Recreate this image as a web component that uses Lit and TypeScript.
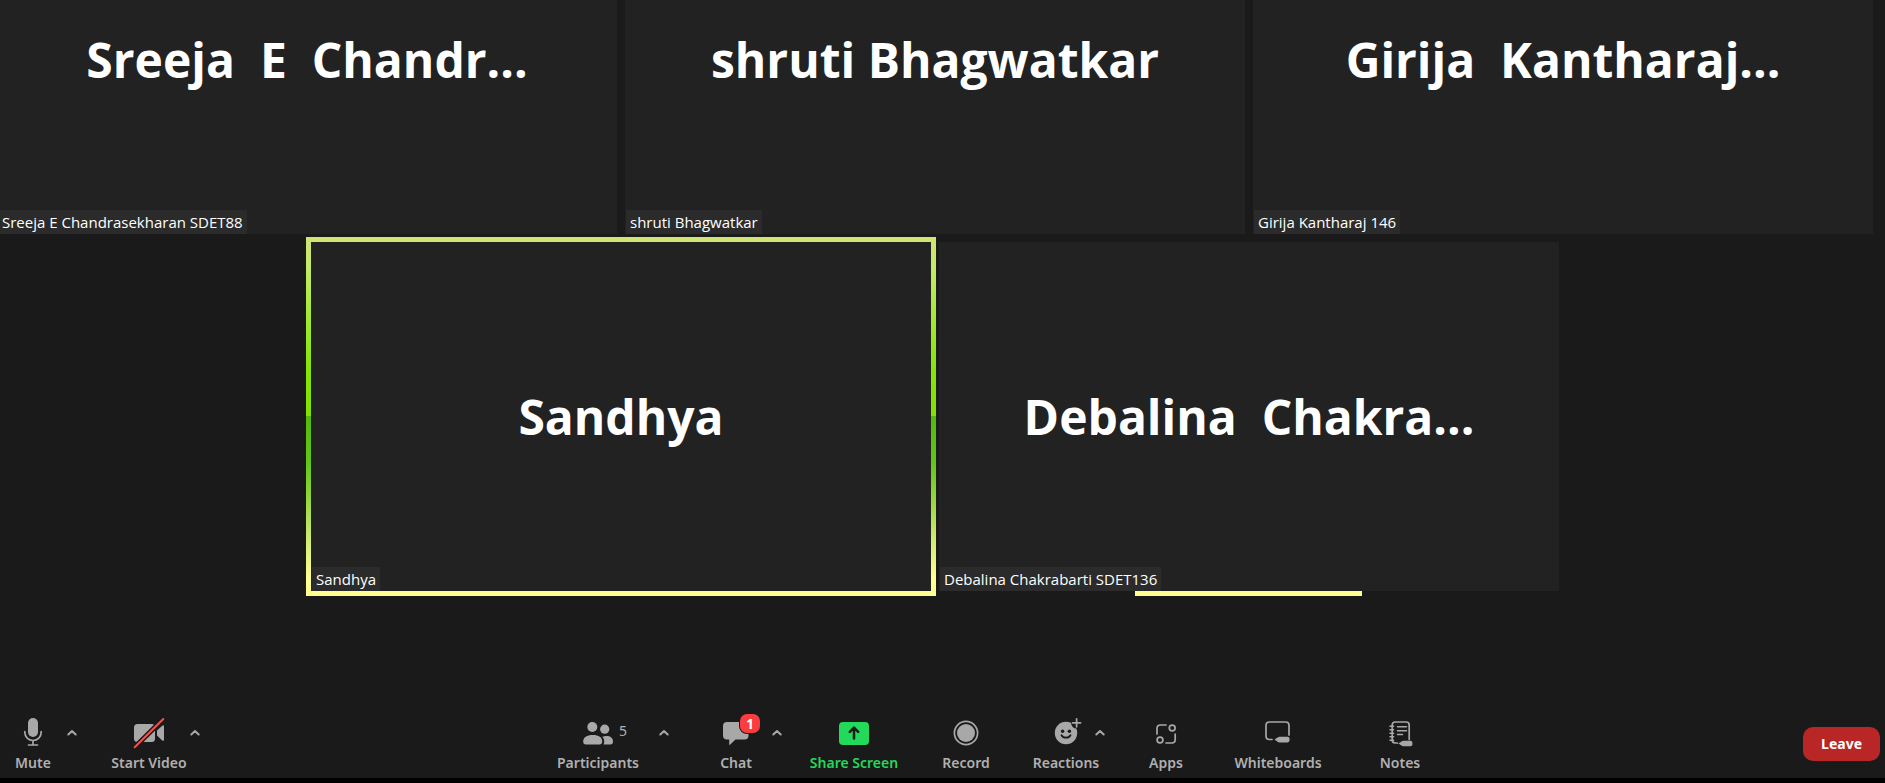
import { LitElement, html, svg, css, nothing } from 'lit';
import type { TemplateResult } from 'lit';

interface Person {
  title: string;
  name: string;
  speaking?: boolean;
  reaction?: boolean;
}

interface Tool {
  id: string;
  label: string;
  menu?: boolean;
  count?: number;
  badge?: number;
}

const ROWS: Person[][] = [
  [
    { title: 'Sreeja  E  Chandr...', name: 'Sreeja E Chandrasekharan SDET88' },
    { title: 'shruti Bhagwatkar', name: 'shruti Bhagwatkar' },
    { title: 'Girija  Kantharaj...', name: 'Girija Kantharaj 146' },
  ],
  [
    { title: 'Sandhya', name: 'Sandhya', speaking: true },
    { title: 'Debalina  Chakra...', name: 'Debalina Chakrabarti SDET136', reaction: true },
  ],
];

const AUDIO_VIDEO: Tool[] = [
  { id: 'mute', label: 'Mute', menu: true },
  { id: 'video', label: 'Start Video', menu: true },
];

const MEETING: Tool[] = [
  { id: 'participants', label: 'Participants', menu: true, count: 5 },
  { id: 'chat', label: 'Chat', menu: true, badge: 1 },
  { id: 'share', label: 'Share Screen' },
  { id: 'record', label: 'Record' },
  { id: 'reactions', label: 'Reactions', menu: true },
  { id: 'apps', label: 'Apps' },
  { id: 'whiteboards', label: 'Whiteboards' },
  { id: 'notes', label: 'Notes' },
];

const ICONS: Record<string, TemplateResult> = {
  mute: svg`
    <rect class="fill" x="-5" y="4" width="10" height="19" rx="5"/>
    <path class="line" d="M-8.2 17.5v.8a8.2 8.2 0 0 0 16.4 0v-.8M0 26.5V31M-4.5 31h9"/>`,
  video: svg`
    <rect class="fill" x="-15" y="10" width="21" height="18" rx="3.5"/>
    <path class="fill" d="M8 16.6l5.2-4.8q1.8-1.2 1.8.8v13q0 2-1.8.8L8 21.6z"/>
    <path class="gap" d="M-14.3 33.3 14.3 5"/>
    <path class="slash" d="M-14.3 33.3 14.3 5"/>`,
  participants: svg`
    <circle class="fill" cx="-5.7" cy="13" r="5"/>
    <circle class="fill" cx="6.7" cy="15.2" r="4.6"/>
    <path class="fill" d="M-14.8 27.5c0-4.200 3.600-6.500 9.600-6.500s9.400 2.300 9.400 6.500q0 3-2.800 3h-13.400q-2.800 0-2.800-3z"/>
    <path class="fill" d="M4.300 22.800q2-.8 4-.8c4.200 0 6.700 2 6.700 5.500q0 3-2.600 3H5.600c1.200-2.600.8-5.400-1.300-7.700z"/>`,
  chat: svg`
    <path class="fill" d="M-9 8H8.500q4 0 4 4v9.500q0 4-4 4H-.5L-6 30.700q-.8.6-.8-.4v-4.800H-9q-4 0-4-4V12q0-4 4-4z"/>`,
  share: svg`
    <rect class="green" x="-15" y="8" width="30" height="23" rx="4"/>
    <path class="arrow" d="M0 24.500v-10.500M-4.200 17.800 0 13.600l4.200 4.200"/>`,
  record: svg`
    <circle class="line" cx="0" cy="19" r="11.600"/>
    <circle class="fill" cx="0" cy="19" r="9"/>`,
  reactions: svg`
    <circle class="fill" cx="0" cy="19" r="11.200"/>
    <circle class="dark" cx="10.600" cy="9" r="5.500"/>
    <path class="line" d="M10.600 4.800v8M6.600 8.800h8"/>
    <circle class="dark" cx="-3.400" cy="17.200" r="1.700"/>
    <circle class="dark" cx="3.400" cy="17.200" r="1.700"/>
    <path class="smile" d="M-4.500 21.300c1.800 3.200 7.200 3.200 9 0"/>`,
  apps: svg`
    <path class="line" d="M-9 20v-5.500q0-3.500 3.500-3.500H0M9.200 20v5.500q0 3.500-3.500 3.500H0"/>
    <circle class="line" cx="6.200" cy="14" r="2.900"/>
    <circle class="line" cx="-6" cy="26" r="2.900"/>`,
  whiteboards: svg`
    <path class="line" d="M-6 25.500h-2.500q-3.500 0-3.500-3.500V11.500Q-12 8-8.500 8h16Q11 8 11 11.500V21"/>
    <path class="fill" d="M-3.500 25.500 0 23.200q.5-.4 1.500-.4h8q2 0 2 1.800v2q0 1.800-2 1.800h-8q-1 0-1.500-.4z"/>`,
  notes: svg`
    <path class="line" d="M-2.500 29h-2.300q-3 0-3-3V11q0-3 3-3H6.200q3 0 3 3v14.500"/>
    <path class="thin" d="M-10 12.200h3.600M-10 15.700h3.600M-10 19.200h3.600M-10 22.700h3.600M-10 26.200h3.600M-2.500 12.800h9M-2.500 16.700h9M-2.500 20.500h5"/>
    <path class="fill" d="M-1.500 29.500 1.800 27.200q.6-.4 1.600-.4h7q2 0 2 1.800v2q0 1.600-2 1.600h-7q-1 0-1.600-.4z"/>`,
};

class MeetingTile extends LitElement {
  static properties = { person: { attribute: false } };
  declare person: Person;

  static styles = css`
    :host {
      display: block;
      min-width: 0;
    }
    .tile {
      position: relative;
      display: grid;
      align-items: center;
      width: 100%;
      height: 100%;
      background: #222;
    }
    .speaking::before {
      content: '';
      position: absolute;
      inset: -5px;
      z-index: -1;
      background: linear-gradient(
        #d2e374 0%, #c6ea68 8%, #a4e935 22%, #88e406 37%, #84e000 50%,
        #56b80c 50%, #62c61a 63%, #94d63c 73%, #d0ea70 84%, #ffff90 95%
      );
    }
    .reaction::after {
      content: '';
      position: absolute;
      top: 100%;
      left: 31.6%;
      width: 36.7%;
      height: 5px;
      background: #ffff90;
    }
    .title {
      grid-area: 1 / 1;
      margin: 0;
      text-align: center;
      white-space: pre;
      font-size: 48px;
      line-height: 68px;
      font-weight: 700;
      color: #fff;
    }
    .name {
      grid-area: 1 / 1;
      place-self: end start;
      margin-left: 1px;
      padding: 0 4px;
      font-size: 15px;
      line-height: 24px;
      color: #fff;
      background: #2b2b2b;
      white-space: nowrap;
    }
  `;

  render() {
    const p = this.person;
    const state = p.speaking ? 'speaking' : p.reaction ? 'reaction' : '';
    return html`<div class="tile ${state}">
      <h2 class="title">${p.title}</h2>
      <div class="name">${p.name}</div>
    </div>`;
  }
}
customElements.define('meeting-tile', MeetingTile);

class AppRoot extends LitElement {
  static styles = css`
    :host {
      display: flex;
      flex-direction: column;
      min-height: 100vh;
      box-sizing: border-box;
      border-bottom: 5px solid #000;
      background: #1a1a1a;
      color: #b0b0b0;
      font-family: 'Noto Sans', 'Open Sans', sans-serif;
      overflow: hidden;
    }
    .stage {
      flex: 1 1 0;
      min-height: 0;
      display: flex;
      flex-direction: column;
      justify-content: flex-end;
      gap: 8px;
      padding: 0 12px 119px 0;
      margin-left: -3px;
      overflow: hidden;
      isolation: isolate;
    }
    .row {
      flex: none;
      display: flex;
      justify-content: center;
      gap: 8px;
    }
    meeting-tile {
      flex: none;
      width: calc((100% - 16px) / 3);
      aspect-ratio: 16 / 9;
      font-family: 'Open Sans', 'Noto Sans', sans-serif;
    }
    .toolbar {
      display: grid;
      grid-template-columns: minmax(232px, 528fr) auto minmax(90px, 413fr);
      align-items: center;
    }
    .group {
      display: grid;
      padding: 4px 0 5px;
    }
    .av {
      grid-template-columns: 66px 166px;
    }
    .meeting {
      grid-template-columns: 140px 136px 100px 124px 76px 124px 100px 144px;
    }
    .tool {
      --slot: 32px;
      display: grid;
      grid-template-rows: 38px 20px;
      row-gap: 1px;
    }
    .mute { --slot: 38px; }
    .video { --slot: 52px; }
    .participants { --slot: 92px; }
    .chat { --slot: 42px; }
    .reactions { --slot: 28px; }
    button {
      margin: 0;
      padding: 0;
      border: 0;
      background: none;
      color: inherit;
      font: inherit;
      cursor: pointer;
    }
    .main {
      grid-area: 1 / 1 / 3 / 2;
      justify-self: center;
      display: grid;
      grid-template-rows: 38px 20px;
      row-gap: 1px;
      justify-items: center;
    }
    .slot {
      position: relative;
      display: grid;
      grid-template-columns: 1fr 32px 1fr;
      align-items: center;
      width: var(--slot);
      justify-content: center;
    }
    .icon {
      grid-column: 2;
      justify-self: center;
      width: 32px;
      height: 38px;
      overflow: visible;
    }
    .count {
      grid-column: 3;
      padding: 0 0 4px 5px;
      text-align: left;
      font-size: 14px;
      line-height: 20px;
    }
    .badge {
      position: absolute;
      left: calc(50% + 4px);
      top: 0;
      width: 20px;
      border-radius: 7px;
      box-shadow: 0 0 0 1px #1a1a1a;
      background: #fb3c40;
      color: #fff;
      font-size: 14px;
      line-height: 19px;
      font-weight: 700;
      text-align: center;
    }
    .label {
      font-size: 14px;
      line-height: 20px;
      font-weight: 600;
      white-space: nowrap;
    }
    .share .label {
      color: #23d959;
    }
    .caret {
      grid-area: 1 / 1 / 2 / 2;
      justify-self: start;
      z-index: 1;
      width: 16px;
      height: 38px;
      margin-left: calc(50% + var(--slot) / 2 + 12px);
    }
    .caret svg {
      display: block;
      width: 16px;
      height: 38px;
    }
    .fill { fill: #a8a8a8; }
    .green { fill: #23d959; }
    .dark { fill: #1a1a1a; }
    .line, .thin, .gap, .slash, .arrow, .smile {
      fill: none;
      stroke: #a8a8a8;
      stroke-width: 1.7;
      stroke-linecap: round;
      stroke-linejoin: round;
    }
    .thin { stroke-width: 1.5; }
    .gap { stroke: #1a1a1a; stroke-width: 5; }
    .slash { stroke: #f4504e; stroke-width: 2; }
    .arrow { stroke: #1a1a1a; stroke-width: 2.5; }
    .smile { stroke: #1a1a1a; stroke-width: 1.8; }
    .caret .line { stroke-width: 2; }
    .leave {
      justify-self: end;
      margin-right: 5px;
      padding: 0 18px;
      border-radius: 10px;
      background: #b92626;
      color: #fff;
      font-size: 14px;
      line-height: 34px;
      font-weight: 700;
    }
  `;

  private tool(t: Tool) {
    return html`<div class="tool ${t.id}">
      <button class="main" type="button">
        <span class="slot">
          <svg class="icon" viewBox="-16 0 32 38" aria-hidden="true">${ICONS[t.id]}</svg>
          ${t.count ? html`<span class="count">${t.count}</span>` : nothing}
          ${t.badge ? html`<span class="badge">${t.badge}</span>` : nothing}
        </span>
        <span class="label">${t.label}</span>
      </button>
      ${t.menu
        ? html`<button class="caret" type="button" aria-label="${t.label} options">
            <svg viewBox="0 0 16 38" aria-hidden="true"><path class="line" d="M4.300 20.500 8 17l3.700 3.500"/></svg>
          </button>`
        : nothing}
    </div>`;
  }

  render() {
    return html`
      <main class="stage">
        ${ROWS.map(
          (row) => html`<div class="row">
            ${row.map((p) => html`<meeting-tile .person=${p}></meeting-tile>`)}
          </div>`,
        )}
      </main>
      <footer class="toolbar">
        <div class="group av">${AUDIO_VIDEO.map((t) => this.tool(t))}</div>
        <div class="group meeting">${MEETING.map((t) => this.tool(t))}</div>
        <button class="leave" type="button">Leave</button>
      </footer>
    `;
  }
}
customElements.define('app-root', AppRoot);
